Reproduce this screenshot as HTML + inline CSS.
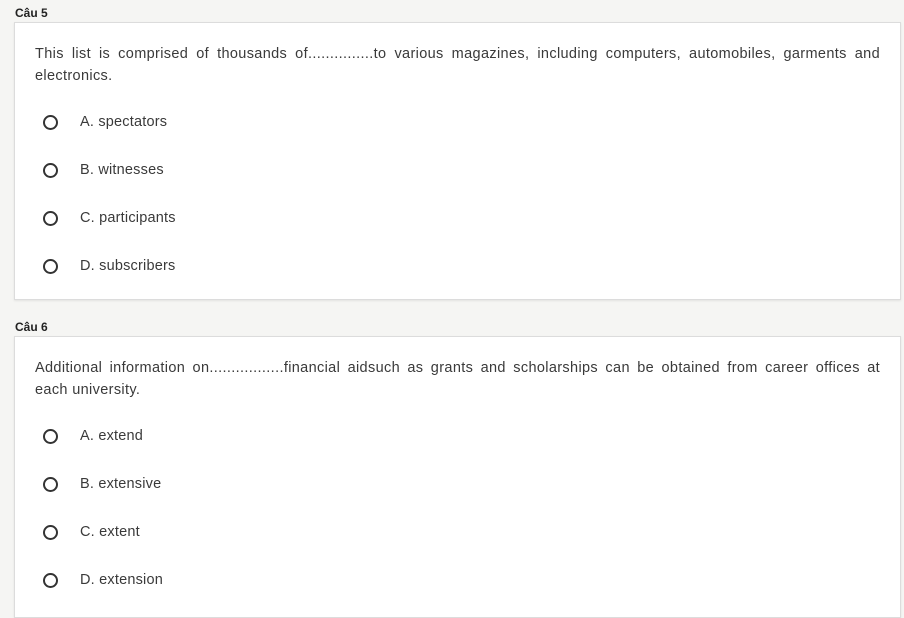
<!DOCTYPE html>
<html><head><meta charset="utf-8"><style>
body{margin:0;background:#f5f5f3;font-family:"Liberation Sans",Arial,sans-serif;width:904px;height:601px;overflow:hidden;position:relative;color:#333}
.lbl{position:absolute;left:15px;font-size:12px;font-weight:bold;color:#222}
.card{position:absolute;left:14px;width:885px;background:#fff;border:1px solid #dcdcdc;box-shadow:0 1px 2px rgba(0,0,0,.08)}
.q{position:absolute;left:20px;width:845px;font-size:14.5px;line-height:22px;text-align:justify;color:#3a3a3a;letter-spacing:0.35px}
.opt{position:absolute;left:28px;height:20px;font-size:14.5px;line-height:20px;color:#3a3a3a;letter-spacing:0.2px}
.opt i{position:absolute;left:0;top:3px;width:11px;height:11px;border:2px solid #333;border-radius:50%}
.opt span{position:absolute;left:37px;white-space:nowrap}
</style></head><body>
<div class="lbl" style="top:6px">Câu 5</div>
<div class="card" style="top:22px;height:276px">
<div class="q" style="top:20px">This list is comprised of thousands of...............to various magazines, including computers, automobiles, garments and electronics.</div>
<div class="opt" style="top:89px"><i></i><span>A. spectators</span></div>
<div class="opt" style="top:137px"><i></i><span>B. witnesses</span></div>
<div class="opt" style="top:185px"><i></i><span>C. participants</span></div>
<div class="opt" style="top:233px"><i></i><span>D. subscribers</span></div>
</div>
<div class="lbl" style="top:320px">Câu 6</div>
<div class="card" style="top:336px;height:280px">
<div class="q" style="top:20px">Additional information on.................financial aidsuch as grants and scholarships can be obtained from career offices at <span style="white-space:nowrap">each university.</span></div>
<div class="opt" style="top:89px"><i></i><span>A. extend</span></div>
<div class="opt" style="top:137px"><i></i><span>B. extensive</span></div>
<div class="opt" style="top:185px"><i></i><span>C. extent</span></div>
<div class="opt" style="top:233px"><i></i><span>D. extension</span></div>
</div>
</body></html>
